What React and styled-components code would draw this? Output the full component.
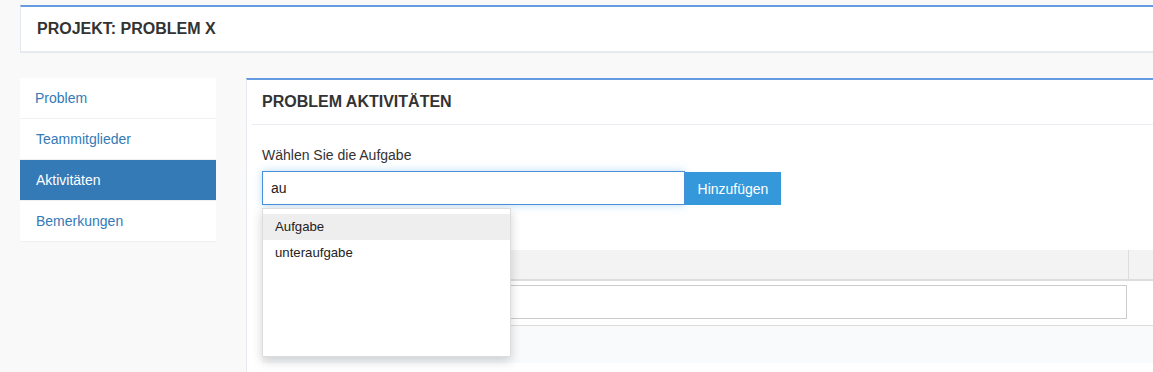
import { createGlobalStyle, styled } from 'styled-components';

const GlobalStyle = createGlobalStyle`
  html, body {
    margin: 0;
    background: #f9f9f9;
    overflow: hidden;
    font-family: "Liberation Sans", Arial, sans-serif;
    color: #333;
  }
`;

const navItems = ['Problem', 'Teammitglieder', 'Aktivitäten', 'Bemerkungen'];
const suggestions = ['Aufgabe', 'unteraufgabe'];

function App() {
  const active = 'Aktivitäten';

  return (
    <Page>
      <GlobalStyle />
      <TopBox>
        <BoxTitle>PROJEKT: PROBLEM X</BoxTitle>
        <MenuGlyph>≡</MenuGlyph>
      </TopBox>

      <Columns>
        <SideNav>
          {navItems.map((item) => (
            <NavItem key={item} $active={item === active}>{item}</NavItem>
          ))}
        </SideNav>

        <Panel>
          <PanelHead>
            <BoxTitle>PROBLEM AKTIVITÄTEN</BoxTitle>
          </PanelHead>
          <PanelBody>
            <Label>Wählen Sie die Aufgabe</Label>
            <InputGroup>
              <SearchInput defaultValue="au" />
              <AddButton>Hinzufügen</AddButton>
              <Dropdown>
                {suggestions.map((s, i) => (
                  <Option key={s} $hover={i === 0}>{s}</Option>
                ))}
              </Dropdown>
            </InputGroup>

            <Table>
              <HeadRow>
                <HeadCell />
                <HeadCell $last />
              </HeadRow>
              <BodyRow>
                <RowInput />
                <div />
              </BodyRow>
              <FootRow />
            </Table>
          </PanelBody>
        </Panel>
      </Columns>
    </Page>
  );
}

const Page = styled.div`
  width: 1161px;
  padding: 5px 0 0 20px;
`;

const TopBox = styled.div`
  display: flex;
  align-items: center;
  justify-content: space-between;
  height: 44px;
  padding: 0 16px;
  background: #fff;
  border-top: 2px solid #659be0;
  border-left: 1px solid #e3e8ee;
  border-bottom: 2px solid #e6eaef;
`;

const BoxTitle = styled.h3`
  margin: 0;
  font-size: 16px;
  font-weight: bold;
  color: #333;
`;

const MenuGlyph = styled.span`
  font-size: 14px;
  color: #3a7fc1;
`;

const Columns = styled.div`
  display: flex;
  gap: 30px;
  margin-top: 25px;
`;

const SideNav = styled.nav`
  display: flex;
  flex-direction: column;
  width: 196px;
  flex-shrink: 0;
  align-self: flex-start;
  background: #fff;
`;

const NavItem = styled.a`
  display: flex;
  align-items: center;
  height: 40px;
  padding: 0 16px;
  font-size: 14px;
  color: ${(p) => (p.$active ? '#fff' : '#337ab7')};
  background: ${(p) => (p.$active ? '#337ab7' : '#fff')};
  border-bottom: 1px solid #eef0f3;
  &:first-child { padding-left: 15px; }
`;

const Panel = styled.section`
  flex: 1;
  background: #fff;
  border-top: 2px solid #659be0;
  border-left: 1px solid #e6e9ee;
  min-height: 300px;
`;

const PanelHead = styled.div`
  display: flex;
  align-items: center;
  height: 44px;
  margin-left: 5px;
  padding: 0 15px 0 10px;
  border-bottom: 1px solid #e9ecf0;
`;

const PanelBody = styled.div`
  padding: 22px 15px 0 15px;
`;

const Label = styled.div`
  font-size: 14px;
  color: #333;
  margin-bottom: 8px;
`;

const InputGroup = styled.div`
  position: relative;
  display: flex;
  width: 519px;
`;

const SearchInput = styled.input`
  width: 423px;
  height: 34px;
  box-sizing: border-box;
  padding: 0 8px;
  font-family: inherit;
  font-size: 14px;
  color: #222;
  border: 1px solid #4a90d9;
  outline: none;
  box-shadow: 0 0 8px rgba(102, 175, 233, 0.45);
`;

const AddButton = styled.button`
  width: 96px;
  height: 33px;
  margin-top: 1px;
  border: none;
  background: #3498db;
  color: #fff;
  font-family: inherit;
  font-size: 14px;
`;

const Dropdown = styled.ul`
  position: absolute;
  top: 37px;
  left: 0;
  z-index: 5;
  width: 249px;
  height: 149px;
  box-sizing: border-box;
  margin: 0;
  padding: 5px 0 0;
  list-style: none;
  background: #fff;
  border: 1px solid #ddd;
  box-shadow: 0 4px 10px rgba(0, 0, 0, 0.18);
`;

const Option = styled.li`
  height: 26px;
  line-height: 26px;
  padding: 0 12px;
  font-size: 13.2px;
  color: #222;
  background: ${(p) => (p.$hover ? '#eee' : '#fff')};
`;

const Table = styled.div`
  margin-top: 45px;
`;

const HeadRow = styled.div`
  display: grid;
  grid-template-columns: 866px 1fr;
  height: 29px;
  background: #f3f3f3;
  border-bottom: 2px solid #ddd;
`;

const HeadCell = styled.div`
  border-left: ${(p) => (p.$last ? '1px solid #ddd' : 'none')};
`;

const BodyRow = styled.div`
  display: grid;
  grid-template-columns: 866px 1fr;
  padding: 4px 0 6px;
`;

const RowInput = styled.div`
  height: 34px;
  box-sizing: border-box;
  margin-right: 1px;
  border: 1px solid #ccc;
`;

const FootRow = styled.div`
  height: 37px;
  background: #f9fafc;
  border-top: 1px solid #ddd;
`;

export default App;
